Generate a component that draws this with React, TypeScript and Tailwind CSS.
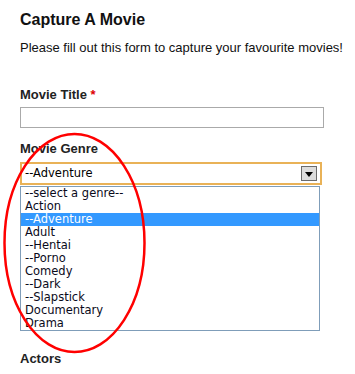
import React from 'react';

const genres = [
  '--select a genre--',
  'Action',
  '--Adventure',
  'Adult',
  '--Hentai',
  '--Porno',
  'Comedy',
  '--Dark',
  '--Slapstick',
  'Documentary',
  'Drama',
];

const App = () => {
  const selected = '--Adventure';

  return (
    <div className="relative w-[355px] h-[374px] overflow-hidden bg-white font-['Liberation_Sans',Arial,sans-serif]">
      <div className="pl-[20px] pt-[10px]">
        <h1 className="text-[16px] leading-[20px] font-bold text-[#111]">Capture A Movie</h1>
        <p className="mt-[10px] text-[13px] leading-[16px] text-[#111]">
          Please fill out this form to capture your favourite movies!
        </p>

        <form>
          <label className="block mt-[31px] text-[13px] leading-[16px] font-bold text-[#222]">
            Movie Title <span className="text-[#d00]">*</span>
          </label>
          <input
            type="text"
            className="block mt-[4px] w-[304px] h-[21px] border border-[#aaa] bg-white outline-none"
          />

          <label className="block mt-[13px] text-[13px] leading-[16px] font-bold text-[#222]">
            Movie Genre
          </label>
          <div className="relative mt-[5px] w-[302px]">
            <div className="flex items-center justify-between h-[23px] border-2 border-[#e9b257] bg-white pl-[3px] pr-[3px]">
              <span className="text-[11.5px] text-black font-['DejaVu_Sans',Verdana,sans-serif]">{selected}</span>
              <span className="flex items-end justify-center w-[16px] h-[15px] border border-[#6b6b6b] bg-[#dcdcdc] pb-[3px]">
                <svg width="8" height="5" viewBox="0 0 8 5">
                  <path d="M0 0H8L4 5Z" fill="#000" />
                </svg>
              </span>
            </div>

            {/* open dropdown list */}
            <ul className="absolute left-0 top-[24px] z-10 w-[300px] border border-[#7f9db9] bg-white font-['DejaVu_Sans',Verdana,sans-serif] text-[11.5px]">
              {genres.map((g) => (
                <li
                  key={g}
                  className={
                    g === selected
                      ? 'h-[13px] leading-[13px] pl-[4px] bg-[#3399ff] text-white'
                      : 'h-[13px] leading-[13px] pl-[4px] text-[#0a0a1a]'
                  }
                >
                  {g}
                </li>
              ))}
            </ul>
          </div>

          <p className="mt-[130px] text-[13px] leading-[16px] text-[#555]">Hold Ctrl to pick a few genres</p>

          <label className="block mt-[20px] text-[13px] leading-[16px] font-bold text-[#222]">Actors</label>
        </form>
      </div>

      {/* red annotation circle */}
      <svg className="absolute left-0 top-0 pointer-events-none z-20" width="355" height="374">
        <ellipse cx="74.5" cy="243" rx="70" ry="109" fill="none" stroke="#ff0000" strokeWidth="2.5" />
      </svg>
    </div>
  );
};

export default App;
